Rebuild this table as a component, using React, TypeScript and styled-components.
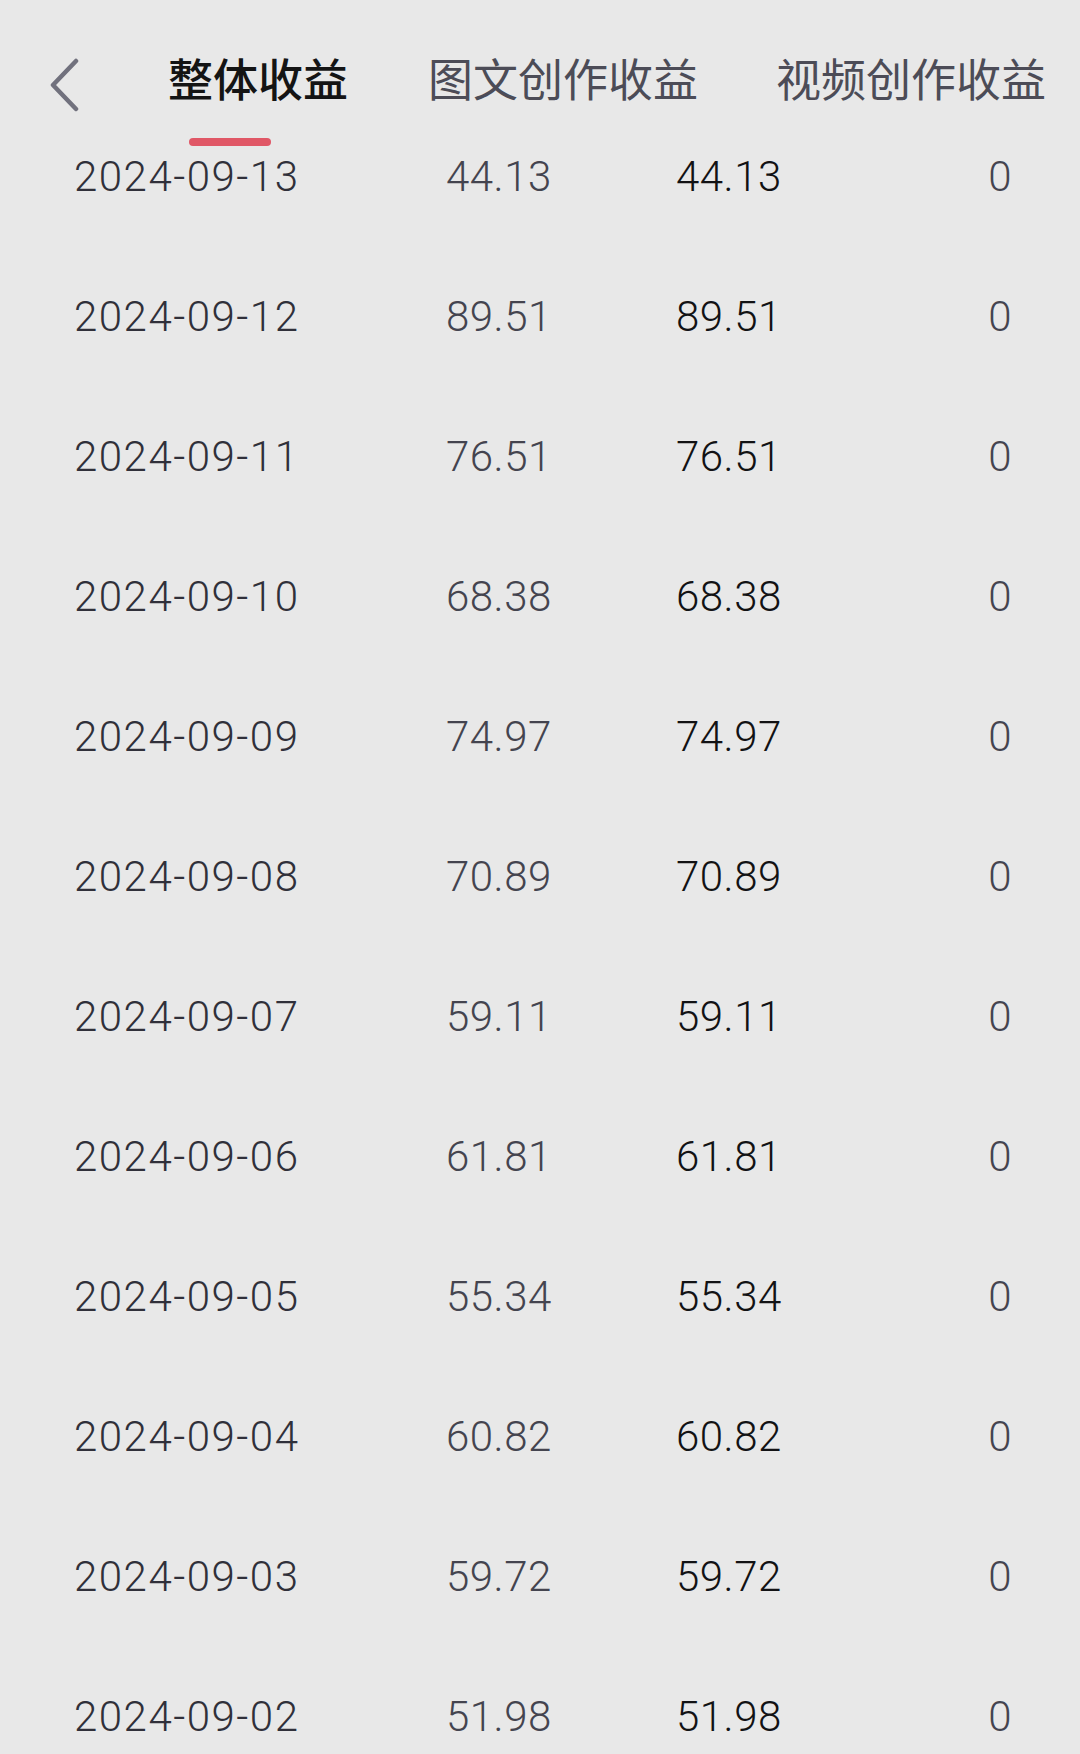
import styled, { createGlobalStyle } from "styled-components";

const GlobalStyle = createGlobalStyle`
  html, body {
    margin: 0;
    padding: 0;
    background: #e8e8e8;
    overflow: hidden;
  }
  body {
    font-family: Roboto, "Noto Sans CJK SC", sans-serif;
  }
`;

const Page = styled.div`
  width: 1080px;
  height: 1754px;
  background: #e8e8e8;
  overflow: hidden;
`;

const Header = styled.div`
  height: 148px;
  display: flex;
  align-items: flex-start;
  padding-top: 51px;
  box-sizing: border-box;
`;

const BackButton = styled.button`
  width: 168px;
  height: 60px;
  margin-top: 5px;
  padding: 0 0 0 48px;
  display: flex;
  align-items: center;
  background: transparent;
  border: none;
  cursor: pointer;
`;

const Tabs = styled.div`
  display: flex;
  align-items: flex-start;
  gap: 78px;
`;

const Tab = styled.div<{ $active?: boolean }>`
  position: relative;
  font-family: "Noto Sans CJK SC", sans-serif;
  font-size: 45px;
  line-height: 54px;
  white-space: nowrap;
  font-weight: ${(p) => (p.$active ? 500 : 400)};
  color: ${(p) => (p.$active ? "#141414" : "#4c4c57")};
  margin-right: ${(p) => (p.$active ? "2px" : "0")};
`;

const Underline = styled.span`
  position: absolute;
  left: 21px;
  top: 87px;
  width: 82px;
  height: 8px;
  border-radius: 4px;
  background: #e05766;
`;

const List = styled.div`
  display: flex;
  flex-direction: column;
`;

const Row = styled.div`
  height: 140px;
  display: grid;
  grid-template-columns: 372px 230px 1fr auto;
  padding: 0 68px 0 74px;
  font-family: Roboto, sans-serif;
  font-size: 42px;
  font-weight: 300;
  letter-spacing: 1.5px;
  line-height: 58px;
`;

const Cell = styled.span<{ $tone: "date" | "muted" | "strong" }>`
  color: ${(p) =>
    p.$tone === "strong" ? "#121214" : p.$tone === "date" ? "#30303a" : "#44444f"};
  letter-spacing: ${(p) => (p.$tone === "date" ? "1.5px" : "0.5px")};
`;

const rows: [string, string][] = [
  ["2024-09-13", "44.13"],
  ["2024-09-12", "89.51"],
  ["2024-09-11", "76.51"],
  ["2024-09-10", "68.38"],
  ["2024-09-09", "74.97"],
  ["2024-09-08", "70.89"],
  ["2024-09-07", "59.11"],
  ["2024-09-06", "61.81"],
  ["2024-09-05", "55.34"],
  ["2024-09-04", "60.82"],
  ["2024-09-03", "59.72"],
  ["2024-09-02", "51.98"],
];

function BackIcon() {
  return (
    <svg width="32" height="56" viewBox="0 0 32 56" fill="none">
      <path
        d="M28 3 L5 27 L28 51"
        stroke="#71717d"
        strokeWidth="4.5"
        strokeLinecap="round"
        strokeLinejoin="round"
      />
    </svg>
  );
}

export default function App() {
  return (
    <Page>
      <GlobalStyle />
      <Header>
        <BackButton aria-label="返回">
          <BackIcon />
        </BackButton>
        <Tabs>
          <Tab $active>
            整体收益
            <Underline />
          </Tab>
          <Tab>图文创作收益</Tab>
          <Tab>视频创作收益</Tab>
        </Tabs>
      </Header>
      <List>
        {rows.map(([date, amount]) => (
          <Row key={date}>
            <Cell $tone="date">{date}</Cell>
            <Cell $tone="muted">{amount}</Cell>
            <Cell $tone="strong">{amount}</Cell>
            <Cell $tone="muted">0</Cell>
          </Row>
        ))}
      </List>
    </Page>
  );
}
